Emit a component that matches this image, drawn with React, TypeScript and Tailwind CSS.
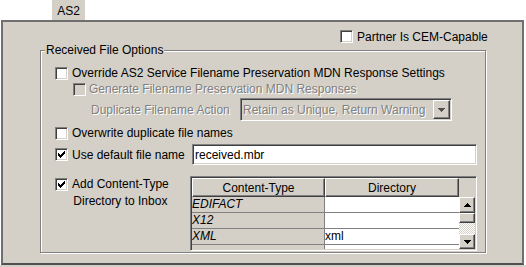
import React from "react";

const sunken =
  "border border-t-[#808080] border-l-[#808080] border-r-white border-b-white shadow-[inset_1px_1px_0_#404040,inset_-1px_-1px_0_#d4d0c8]";
const raised =
  "border border-t-white border-l-white border-r-[#404040] border-b-[#404040] shadow-[inset_-1px_-1px_0_#808080]";
const dimText = "text-[#808080] [text-shadow:1px_1px_0_#ffffff]";

function Check({ checked, disabled }: { checked?: boolean; disabled?: boolean }) {
  return (
    <span
      className={`flex h-[13px] w-[13px] shrink-0 items-center justify-center ${sunken} ${
        disabled ? "bg-[#d4d0c8]" : "bg-white"
      }`}
    >
      {checked && (
        <svg width="7" height="7" viewBox="0 0 7 7" shapeRendering="crispEdges">
          <path
            d="M6 0h1v1h-1z M5 1h2v1h-2z M0 2h1v1h-1z M4 2h3v1h-3z M0 3h2v1h-2z M3 3h3v1h-3z M0 4h5v1h-5z M1 5h3v1h-3z M2 6h1v1h-1z"
            fill={disabled ? "#808080" : "#000"}
          />
        </svg>
      )}
    </span>
  );
}

function Arrow({ up, color = "#000" }: { up?: boolean; color?: string }) {
  return (
    <svg width="7" height="4" viewBox="0 0 7 4" shapeRendering="crispEdges">
      <path
        d={up ? "M3 0h1v1H3z M2 1h3v1H2z M1 2h5v1H1z M0 3h7v1H0z" : "M0 0h7v1H0z M1 1h5v1H1z M2 2h3v1H2z M3 3h1v1H3z"}
        fill={color}
      />
    </svg>
  );
}

function Row({ type, dir }: { type?: string; dir?: string }) {
  return (
    <div className="flex h-[16px] shrink-0">
      <div className="w-[133px] border-r border-b border-[#808080] bg-[#d4d0c8] italic leading-[15px]">{type}</div>
      <div className="flex-1 border-b border-[#808080] bg-white leading-[15px]">{dir}</div>
    </div>
  );
}

export default function App() {
  return (
    <div className="flex h-[267px] w-[526px] flex-col bg-white font-['Liberation_Sans',Arial,sans-serif] text-[12px] leading-[14px] text-black">
      <div className="flex h-[20px] shrink-0 pl-[52px]">
        <div className="flex w-[33px] items-center justify-center bg-[#d4d0c8] pt-[1px]">AS2</div>
      </div>

      <div className="ml-[1px] h-[245px] w-[523px] shrink-0 border-2 border-[#707070] border-b-[#505050] bg-[#d4d0c8]">
        <div className="h-[239px] border-b border-white">
          <div className="mt-[8px] flex h-[13px] items-center gap-[4px] pl-[337px]">
            <Check />
            <span>Partner Is CEM-Capable</span>
          </div>

          <div className="relative ml-[37px] mt-[7px] h-[203px] w-[446px] border border-[#808080] shadow-[inset_1px_1px_0_#fff,1px_1px_0_#fff]">
            <span className="absolute left-[4px] top-[-8px] bg-[#d4d0c8] px-[1px]">Received File Options</span>

            <div className="flex flex-col pl-[14px] pr-[8px] pt-[14px]">
              <div className="flex h-[16px] items-center gap-[4px]">
                <Check />
                <span>Override AS2 Service Filename Preservation MDN Response Settings</span>
              </div>

              <div className="flex h-[16px] items-center gap-[3px] pl-[18px]">
                <Check disabled />
                <span className={dimText}>Generate Filename Preservation MDN Responses</span>
              </div>

              <div className="flex h-[25px] items-center pl-[36px]">
                <span className={dimText}>Duplicate Filename Action</span>
                <div className={`ml-auto mr-[25px] flex h-[23px] w-[212px] items-center bg-[#d4d0c8] ${sunken}`}>
                  <span className={`flex-1 pl-[2px] ${dimText}`}>Retain as Unique, Return Warning</span>
                  <span className={`mr-[1px] flex h-[19px] w-[17px] items-center justify-center bg-[#d4d0c8] ${raised}`}>
                    <Arrow color="#505050" />
                  </span>
                </div>
              </div>

              <div className="flex h-[22px] items-center gap-[4px]">
                <Check />
                <span>Overwrite duplicate file names</span>
              </div>

              <div className="flex h-[21px] items-center gap-[4px]">
                <Check checked />
                <span>Use default file name</span>
                <div className={`ml-auto flex h-[21px] w-[285px] items-center bg-white pl-[2px] ${sunken}`}>
                  received.mbr
                </div>
              </div>

              <div className="mt-[11px] flex items-start gap-[4px]">
                <div className="mt-[2px]">
                  <Check checked />
                </div>
                <div className="text-center leading-[17px]">
                  Add Content-Type
                  <br />
                  Directory to Inbox
                </div>

                <div className={`ml-auto flex h-[75px] w-[287px] bg-[#d4d0c8] p-[1px] ${sunken}`}>
                  <div className="flex w-[267px] flex-col overflow-hidden">
                    <div className="flex h-[19px] shrink-0">
                      <div className={`flex w-[133px] items-center justify-center ${raised}`}>Content-Type</div>
                      <div className={`flex flex-1 items-center justify-center ${raised}`}>Directory</div>
                    </div>
                    <Row type="EDIFACT" />
                    <Row type="X12" />
                    <Row type="XML" dir="xml" />
                    <Row />
                  </div>

                  <div className="flex w-[16px] flex-col">
                    <div className="h-[19px] shrink-0" />
                    <div className={`flex h-[16px] shrink-0 items-center justify-center ${raised}`}>
                      <Arrow up />
                    </div>
                    <div className={`h-[10px] shrink-0 ${raised}`} />
                    <div className="flex-1 bg-[repeating-conic-gradient(#ffffff_0_25%,#d4d0c8_0_50%)] bg-[length:2px_2px]" />
                    <div className={`flex h-[15px] shrink-0 items-center justify-center ${raised}`}>
                      <Arrow />
                    </div>
                  </div>
                </div>
              </div>
            </div>
          </div>
        </div>
      </div>

      <div className="h-[2px] bg-[#d4d0c8]" />
    </div>
  );
}
